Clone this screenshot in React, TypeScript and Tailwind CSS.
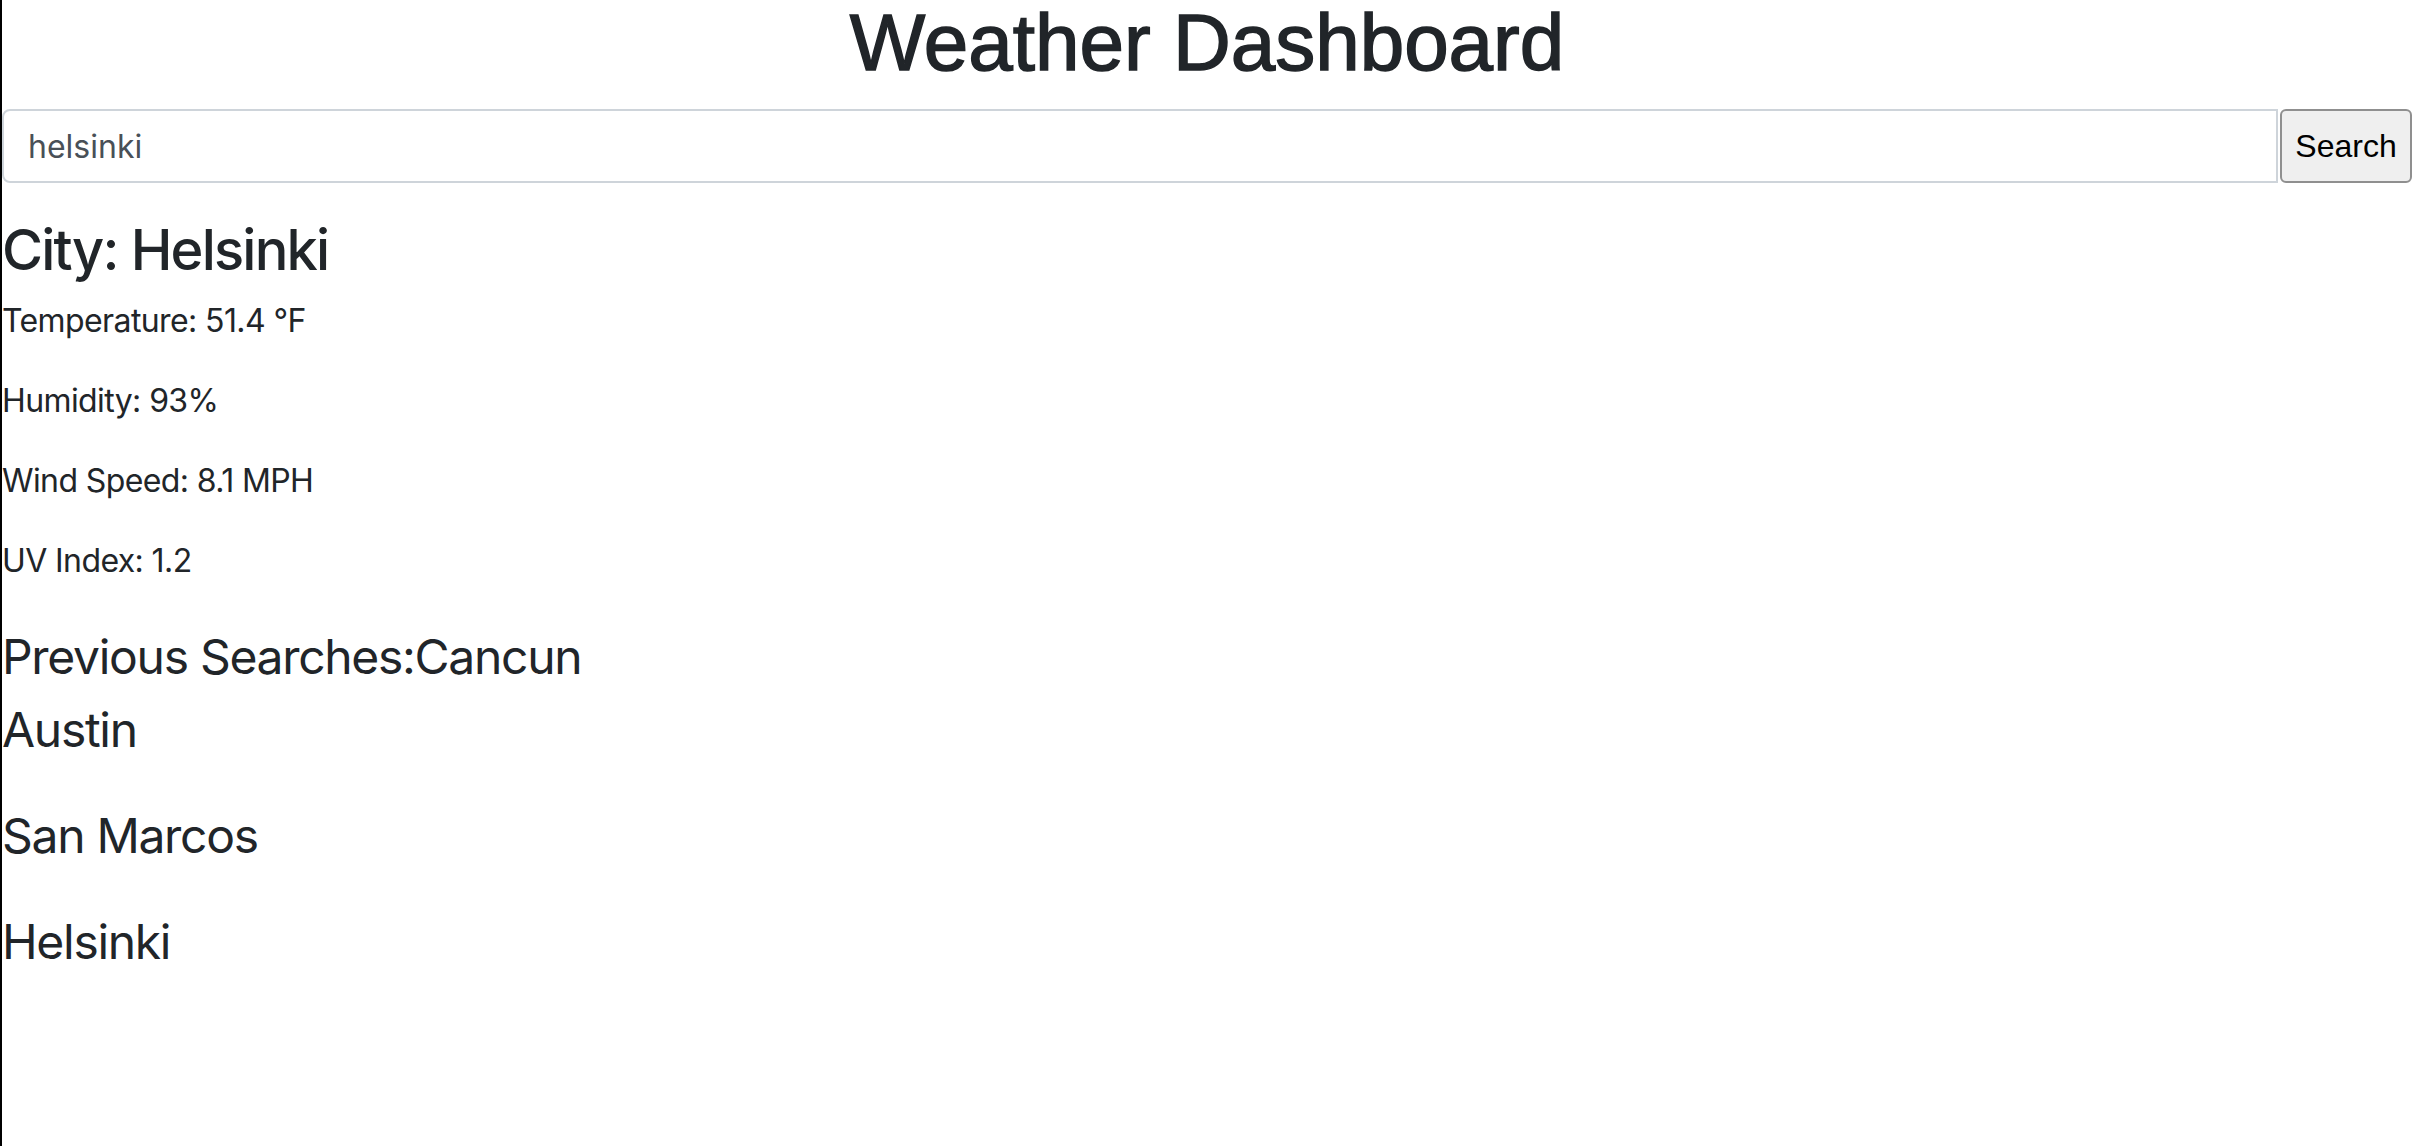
import { useState } from "react";

const previous = ["Austin", "San Marcos", "Helsinki"];

export default function App() {
  const [city, setCity] = useState("helsinki");

  return (
    <div className="min-h-[1146px] border-l-2 border-black bg-white text-[#212529] font-['Inter',sans-serif]">
      <h1 className="text-center text-[80px] leading-[86px] font-['Liberation_Sans',Arial,sans-serif] [-webkit-text-stroke:1.5px_#212529]">
        Weather Dashboard
      </h1>

      <div className="mt-[23px] flex h-[74px] gap-[2px]">
        <input
          value={city}
          onChange={(e) => setCity(e.target.value)}
          className="flex-1 h-full rounded-l-[8px] border-2 border-[#ced4da] pl-[24px] text-[32px] text-[#495057] outline-none"
        />
        <button className="w-[132px] h-full rounded-[6px] border-2 border-[#8f8f8f] bg-[#efefef] text-[32px] text-black font-['Liberation_Sans',Arial,sans-serif]">
          Search
        </button>
      </div>

      <h3 className="mt-[34px] mb-[13px] text-[56px] leading-[67px] font-medium tracking-[-1.8px]">
        City: Helsinki
      </h3>
      <p className="mb-[32px] text-[32px] leading-[48px] tracking-[-0.6px]">Temperature: 51.4 °F</p>
      <p className="mb-[32px] text-[32px] leading-[48px] tracking-[-0.6px]">Humidity: 93%</p>
      <p className="mb-[32px] text-[32px] leading-[48px] tracking-[-0.6px]">Wind Speed: 8.1 MPH</p>
      <p className="mb-[32px] text-[32px] leading-[48px] tracking-[-0.6px]">UV Index: 1.2</p>

      <h4 className="mt-[43px] text-[48px] leading-[58px] tracking-[-1.3px]">Previous Searches:Cancun</h4>
      <div className="mt-[15px] flex flex-col gap-[48px]">
        {previous.map((name) => (
          <h4 key={name} className="text-[48px] leading-[58px] tracking-[-1.3px]">
            {name}
          </h4>
        ))}
      </div>
    </div>
  );
}
